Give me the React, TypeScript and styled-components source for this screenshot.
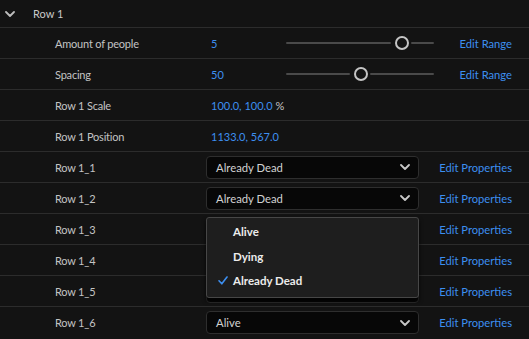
import { useState } from 'react';
import styled, { createGlobalStyle } from 'styled-components';

const GlobalStyle = createGlobalStyle`
  html, body {
    margin: 0;
    padding: 0;
    background: #131313;
  }

  body {
    font-family: Lato, 'Open Sans', sans-serif;
    font-size: 11px;
    color: #c6c6c6;
  }
`;

const OPTIONS = ['Alive', 'Dying', 'Already Dead'];

interface SliderRowData {
  label: string;
  value: string;
  ratio: number;
}

const SLIDERS: SliderRowData[] = [
  { label: 'Amount of people', value: '5', ratio: 0.78 },
  { label: 'Spacing', value: '50', ratio: 0.5 },
];

const SELECTS = [
  { label: 'Row 1_1', value: 'Already Dead' },
  { label: 'Row 1_2', value: 'Already Dead', open: true },
  { label: 'Row 1_3', value: 'Alive' },
  { label: 'Row 1_4', value: 'Dying' },
  { label: 'Row 1_5', value: 'Dying' },
  { label: 'Row 1_6', value: 'Alive' },
];

const Chevron = ({ size = 10 }: { size?: number }) => (
  <svg width={size} height={size * 0.6} viewBox="0 0 10 6" fill="none">
    <path d="M1 1l4 4 4-4" stroke="currentColor" strokeWidth="1.8" strokeLinecap="round" strokeLinejoin="round" />
  </svg>
);

const Slider = ({ ratio }: { ratio: number }) => (
  <Track>
    <TrackLine style={{ width: `calc(${ratio * 100}% - 10px)` }} />
    <Knob style={{ left: `calc(${ratio * 100}% - 6px)` }} />
    <TrackLine style={{ left: `calc(${ratio * 100}% + 10px)`, right: 0 }} />
  </Track>
);

const App = () => {
  const [open] = useState(true);

  return (
    <>
      <GlobalStyle />
      <Panel>
        <HeaderRow>
          <HeaderChevron>
            <Chevron />
          </HeaderChevron>
          <span>Row 1</span>
        </HeaderRow>

        {SLIDERS.map((row) => (
          <Row key={row.label}>
            <Label>{row.label}</Label>
            <ValueCell>
              <Value>{row.value}</Value>
              <Slider ratio={row.ratio} />
            </ValueCell>
            <Action>Edit Range</Action>
          </Row>
        ))}

        <Row>
          <Label>Row 1 Scale</Label>
          <ValueCell>
            <Value>
              100.0, 100.0 <Unit>%</Unit>
            </Value>
          </ValueCell>
        </Row>

        <Row>
          <Label>Row 1 Position</Label>
          <ValueCell>
            <Value>1133.0, 567.0</Value>
          </ValueCell>
        </Row>

        {SELECTS.map((row) => (
          <Row key={row.label}>
            <Label>{row.label}</Label>
            <SelectWrap>
              <SelectBox>
                <span>{row.value}</span>
                <SelectChevron>
                  <Chevron />
                </SelectChevron>
              </SelectBox>
              {row.open && open && (
                <Menu>
                  {OPTIONS.map((opt) => (
                    <MenuItem key={opt}>
                      <Check>
                        {opt === row.value && (
                          <svg width="10" height="9" viewBox="0 0 10 9" fill="none">
                            <path d="M1 4.8l2.8 3L9 1" stroke="#3d8ff0" strokeWidth="1.6" strokeLinecap="round" strokeLinejoin="round" />
                          </svg>
                        )}
                      </Check>
                      {opt}
                    </MenuItem>
                  ))}
                </Menu>
              )}
            </SelectWrap>
            <Action>Edit Properties</Action>
          </Row>
        ))}
      </Panel>
    </>
  );
};

const Panel = styled.div`
  display: flex;
  width: 529px;
  flex-direction: column;
  background: #131313;
`;

const HeaderRow = styled.div`
  display: flex;
  height: 28px;
  padding-left: 5px;
  align-items: center;
  gap: 18px;
  border-bottom: 1px solid #2c2c2c;
  box-sizing: border-box;
  color: #c9c9c9;
`;

const HeaderChevron = styled.span`
  display: flex;
  width: 10px;
  color: #bdbdbd;
`;

const Row = styled.div`
  display: grid;
  height: 31px;
  padding: 0 17px 0 55px;
  grid-template-columns: 151px 1fr auto;
  align-items: center;
  border-bottom: 1px solid #2c2c2c;
  box-sizing: border-box;

  &:last-child {
    border-bottom: none;
  }
`;

const Label = styled.span`
  color: #c4c4c4;
  letter-spacing: -0.2px;
`;

const ValueCell = styled.div`
  display: flex;
  padding-left: 5px;
  align-items: center;
`;

const Value = styled.span`
  width: 75px;
  color: #3d8ff0;
  white-space: nowrap;
`;

const Unit = styled.span`
  color: #c4c4c4;
`;

const Track = styled.div`
  position: relative;
  width: 148px;
  height: 14px;
`;

const TrackLine = styled.div`
  position: absolute;
  top: 6px;
  left: 0;
  height: 2px;
  background: #4a4a4a;
  border-radius: 1px;
`;

const Knob = styled.div`
  position: absolute;
  top: 0;
  width: 10px;
  height: 10px;
  border: 2px solid #c4c4c4;
  border-radius: 50%;
  background: #131313;
`;

const Action = styled.span`
  color: #3d8ff0;
  font-size: 11.2px;
  white-space: nowrap;
`;

const SelectWrap = styled.div`
  position: relative;
  width: 213px;
`;

const SelectBox = styled.div`
  display: flex;
  height: 23px;
  padding: 0 8px 0 9px;
  align-items: center;
  justify-content: space-between;
  background: #070707;
  border: 1px solid #2e2e2e;
  border-radius: 4px;
  box-sizing: border-box;
  color: #d2d2d2;
  font-size: 11.3px;
`;

const SelectChevron = styled.span`
  display: flex;
  color: #c8c8c8;
`;

const Menu = styled.div`
  position: absolute;
  top: 30px;
  left: 0;
  z-index: 2;
  display: flex;
  width: 213px;
  height: 81px;
  padding-top: 2px;
  flex-direction: column;
  background: #1e1e1e;
  border: 1px solid #474747;
  border-radius: 3px;
  box-sizing: border-box;
  box-shadow: 0 3px 4px rgba(0, 0, 0, 0.8);
`;

const MenuItem = styled.div`
  display: flex;
  height: 24.5px;
  padding-left: 10px;
  align-items: center;
  gap: 5px;
  color: #ececec;
  font-size: 11.5px;
  font-weight: 700;
`;

const Check = styled.span`
  display: flex;
  width: 11px;
  justify-content: center;
`;

export default App;
